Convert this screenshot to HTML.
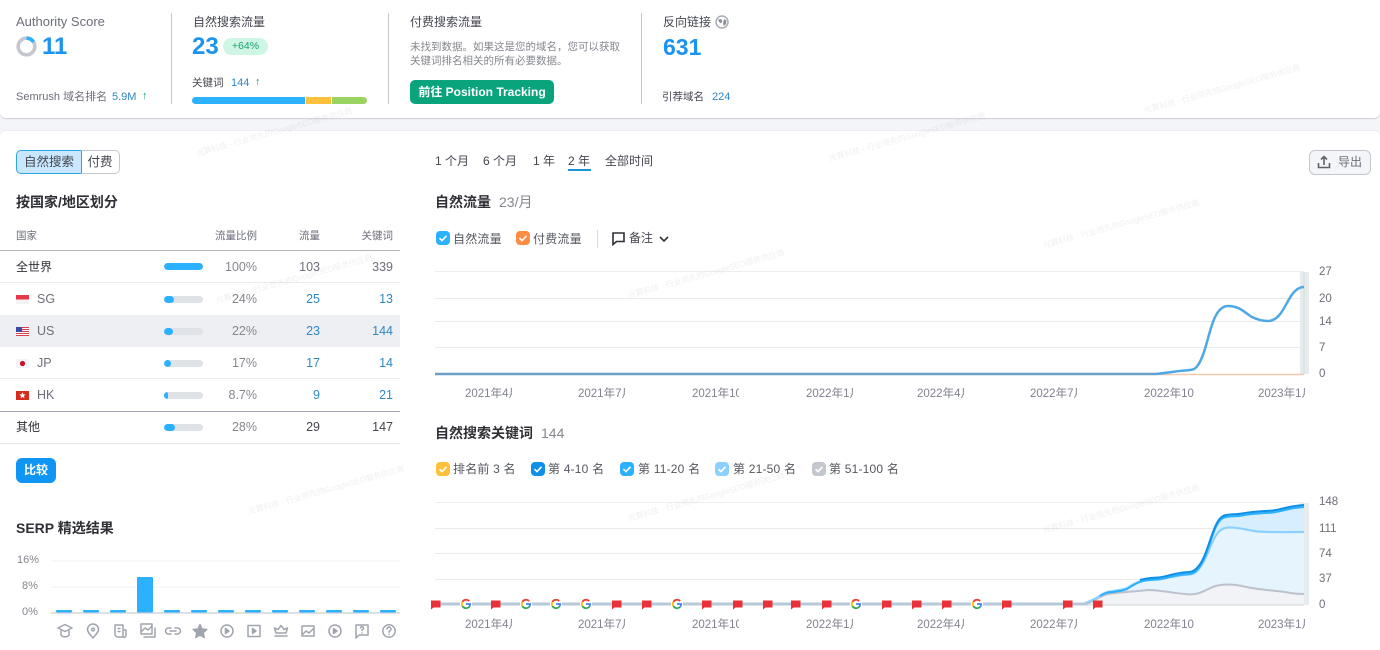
<!DOCTYPE html>
<html lang="zh">
<head>
<meta charset="utf-8">
<title>Overview</title>
<style>
html,body{margin:0;padding:0;width:1380px;height:650px;overflow:hidden;background:#fff}
body{position:relative;font-family:"Liberation Sans","Noto Sans CJK SC",sans-serif;color:#333;filter:blur(.35px)}
.a{position:absolute}
.t{position:absolute;white-space:nowrap;line-height:16px;height:16px;font-size:12px;color:#44464f}
.r{text-align:right}
.b{color:#2f87c4}
.h{font-size:14px;font-weight:bold;color:#2f3036}
.g{color:#6c6e79}
.big{font-size:24px;font-weight:bold;color:#1a94f0;line-height:28px;height:28px}
.d{position:absolute;width:1px;background:#c4c7cf}
.l{position:absolute;left:0;width:400px;height:1px}
.bar{position:absolute;left:164px;width:39px;height:7px;border-radius:4px;background:#dfe2e6;overflow:hidden}
.bar i{display:block;height:7px;background:#2bb1ff;border-radius:4px}
.cb{position:absolute;width:14px;height:14px;border-radius:4px;top:0}
.cb svg{display:block}
.wm{position:absolute;font-size:8px;line-height:12px;white-space:nowrap;color:rgba(140,145,155,.14);transform:rotate(-15.5deg);transform-origin:0 100%;z-index:5}
.x{position:absolute;font-size:11.5px;line-height:14px;height:14px;color:#80838e;overflow:hidden;white-space:nowrap;width:47px}
.y{position:absolute;left:1319px;font-size:11.5px;line-height:14px;color:#6c6e79}
.f{position:absolute;left:16px;width:13px;height:9px}
.s{position:absolute;left:0;top:0}
</style>
</head>
<body>
<!-- top -->
<div class="a" style="left:0;top:108px;width:1380px;height:34px;background:#f4f5f9"></div>
<div class="a" style="left:0;top:-6px;width:1380px;height:124px;background:#fff;border-radius:0 0 6px 6px;box-shadow:0 1px 1px rgba(120,125,140,.3)"></div>
<div class="a" style="left:0;top:131px;width:1380px;height:519px;background:#fff;border-radius:6px 6px 0 0;box-shadow:0 -1px 0 #eceef2"></div>

<div class="t g" style="left:16px;top:14px;font-size:13px">Authority Score</div>
<svg class="a" style="left:16px;top:36px" width="21" height="21"><circle cx="10.5" cy="10.5" r="8.3" fill="none" stroke="#c4c7cf" stroke-width="3.6"/><path d="M10.5 2.2A8.3 8.3 0 0 1 17.5 6" fill="none" stroke="#2bb1ff" stroke-width="3.6"/></svg>
<div class="t big" style="left:42px;top:33px">11</div>
<div class="t g" style="left:16px;top:89px;font-size:11px">Semrush 域名排名</div>
<div class="t b" style="left:112px;top:89px;font-size:11px">5.9M</div>
<div class="t" style="left:142px;top:88px;font-size:11px;color:#1a9f72">↑</div>

<div class="d" style="left:171px;top:13px;height:91px"></div>
<div class="t" style="left:193px;top:14px">自然搜索流量</div>
<div class="t big" style="left:192px;top:33px">23</div>
<div class="a" style="left:223px;top:38px;width:45px;height:17px;border-radius:9px;background:#cff5e5;color:#1a9f72;font-size:10.5px;line-height:17px;text-align:center">+64%</div>
<div class="t" style="left:192px;top:75px;font-size:10.5px">关键词</div>
<div class="t b" style="left:231px;top:75px;font-size:11px">144</div>
<div class="t" style="left:255px;top:74px;font-size:11px;color:#1a9f72">↑</div>
<div class="a" style="left:192px;top:97px;width:175px;height:7px;border-radius:4px;overflow:hidden;background:#fff">
<div class="a" style="left:0;top:0;width:113px;height:7px;background:#2bb1ff"></div>
<div class="a" style="left:114px;top:0;width:25px;height:7px;background:#ffc13b"></div>
<div class="a" style="left:140px;top:0;width:35px;height:7px;background:#98d45f"></div>
</div>

<div class="d" style="left:388px;top:13px;height:91px"></div>
<div class="t" style="left:410px;top:14px">付费搜索流量</div>
<div class="t" style="left:410px;top:39px;font-size:10.5px;color:#85878f">未找到数据。如果这是您的域名，您可以获取</div>
<div class="t" style="left:410px;top:53px;font-size:10.5px;color:#85878f">关键词排名相关的所有必要数据。</div>
<div class="a" style="left:410px;top:80px;width:144px;height:24px;background:#0aa47c;border-radius:5px;color:#fff;font-size:12px;font-weight:bold;line-height:24px;text-align:center;white-space:nowrap">前往 Position Tracking</div>

<div class="d" style="left:641px;top:13px;height:91px"></div>
<div class="t" style="left:663px;top:14px">反向链接</div>
<svg class="a" style="left:715px;top:15px" width="14" height="14" viewBox="0 0 14 14"><circle cx="7" cy="7" r="6" fill="#fff" stroke="#a8abb4" stroke-width="1.5"/><path d="M3 4.5L6 4l1.5 2L6 8.5 4 7zM9 4l2.5 1.5L11 9l-2 2-1-2.5z" fill="#8d9099"/></svg>
<div class="t big" style="left:663px;top:33px;font-size:23px">631</div>
<div class="t" style="left:662px;top:89px;font-size:10.5px">引荐域名</div>
<div class="t b" style="left:712px;top:89px;font-size:11px">224</div>

<!-- left -->
<div class="a" style="left:16px;top:150px;width:64px;height:22px;border:1px solid #2ba6ea;border-radius:5px 0 0 5px;background:#c9e7ff;color:#44464f;font-size:12.5px;line-height:22px;text-align:center">自然搜索</div>
<div class="a" style="left:81px;top:150px;width:38px;height:22px;border:1px solid #c4c7cf;border-left:0;border-radius:0 5px 5px 0;font-size:12.5px;line-height:22px;text-align:center;color:#44464f">付费</div>
<div class="t h" style="left:16px;top:194px">按国家/地区划分</div>

<div class="t g" style="left:16px;top:228px;font-size:10.5px">国家</div>
<div class="t g r" style="left:197px;width:60px;top:228px;font-size:10.5px">流量比例</div>
<div class="t g r" style="left:280px;width:40px;top:228px;font-size:10.5px">流量</div>
<div class="t g r" style="left:343px;width:50px;top:228px;font-size:10.5px">关键词</div>
<div class="l" style="top:250px;background:#b0b3bc"></div>
<div class="l" style="top:282px;background:#e9ebef"></div>
<div class="a" style="left:0;top:315px;width:400px;height:32px;background:#eeeff3"></div>
<div class="l" style="top:378px;background:#e9ebef"></div>
<div class="l" style="top:411px;background:#a5a8b0"></div>
<div class="l" style="top:443px;background:#e4e6ea"></div>

<div class="t" style="left:16px;top:259px;font-size:12px;color:#2f3036">全世界</div>
<div class="bar" style="top:263px"><i style="width:39px"></i></div>
<div class="t g r" style="left:197px;width:60px;top:259px;font-size:12.5px;color:#85878f">100%</div>
<div class="t g r" style="left:280px;width:40px;top:259px;font-size:12.5px">103</div>
<div class="t g r" style="left:343px;width:50px;top:259px;font-size:12.5px">339</div>

<svg class="f" style="top:295px" viewBox="0 0 13 9"><rect width="13" height="9" fill="#f3f3f5"/><rect width="13" height="4.5" fill="#e8394a"/></svg>
<div class="t g" style="left:37px;top:291px;font-size:12.5px">SG</div>
<div class="bar" style="top:296px"><i style="width:10px"></i></div>
<div class="t r" style="left:197px;width:60px;top:291px;font-size:12.5px;color:#85878f">24%</div>
<div class="t b r" style="left:280px;width:40px;top:291px;font-size:12.5px">25</div>
<div class="t b r" style="left:343px;width:50px;top:291px;font-size:12.5px">13</div>

<svg class="f" style="top:327px" viewBox="0 0 13 9"><rect width="13" height="9" fill="#fff"/><path d="M0 .5h13M0 2.5h13M0 4.5h13M0 6.5h13M0 8.5h13" stroke="#d8404f" stroke-width="1"/><rect width="6" height="5" fill="#3f48a8"/></svg>
<div class="t g" style="left:37px;top:323px;font-size:12.5px">US</div>
<div class="bar" style="top:328px"><i style="width:9px"></i></div>
<div class="t r" style="left:197px;width:60px;top:323px;font-size:12.5px;color:#85878f">22%</div>
<div class="t b r" style="left:280px;width:40px;top:323px;font-size:12.5px">23</div>
<div class="t b r" style="left:343px;width:50px;top:323px;font-size:12.5px">144</div>

<svg class="f" style="top:359px" viewBox="0 0 13 9"><rect width="13" height="9" fill="#f3f3f5"/><circle cx="6.5" cy="4.5" r="2.6" fill="#c8102e"/></svg>
<div class="t g" style="left:37px;top:355px;font-size:12.5px">JP</div>
<div class="bar" style="top:360px"><i style="width:7px"></i></div>
<div class="t r" style="left:197px;width:60px;top:355px;font-size:12.5px;color:#85878f">17%</div>
<div class="t b r" style="left:280px;width:40px;top:355px;font-size:12.5px">17</div>
<div class="t b r" style="left:343px;width:50px;top:355px;font-size:12.5px">14</div>

<svg class="f" style="top:391px" viewBox="0 0 13 9"><rect width="13" height="9" fill="#d62b1f"/><path d="M6.5 1.2l.9 2.2 2.3.1-1.8 1.5.6 2.2-2-1.2-2 1.2.6-2.2-1.8-1.5 2.3-.1z" fill="#fff"/></svg>
<div class="t g" style="left:37px;top:387px;font-size:12.5px">HK</div>
<div class="bar" style="top:392px"><i style="width:4px"></i></div>
<div class="t r" style="left:197px;width:60px;top:387px;font-size:12.5px;color:#85878f">8.7%</div>
<div class="t b r" style="left:280px;width:40px;top:387px;font-size:12.5px">9</div>
<div class="t b r" style="left:343px;width:50px;top:387px;font-size:12.5px">21</div>

<div class="t" style="left:16px;top:419px;font-size:12px;color:#2f3036">其他</div>
<div class="bar" style="top:424px"><i style="width:11px"></i></div>
<div class="t r" style="left:197px;width:60px;top:419px;font-size:12.5px;color:#85878f">28%</div>
<div class="t g r" style="left:280px;width:40px;top:419px;font-size:12.5px;color:#44464f">29</div>
<div class="t g r" style="left:343px;width:50px;top:419px;font-size:12.5px;color:#44464f">147</div>

<div class="a" style="left:16px;top:458px;width:40px;height:25px;border-radius:6px;background:#0f96f5;color:#fff;font-size:12px;font-weight:bold;line-height:25px;text-align:center">比较</div>

<div class="t h" style="left:16px;top:520px">SERP 精选结果</div>
<div class="t" style="left:17px;top:552px;font-size:11px;color:#85878f">16%</div>
<div class="t" style="left:22px;top:578px;font-size:11px;color:#85878f">8%</div>
<div class="t" style="left:22px;top:604px;font-size:11px;color:#85878f">0%</div>
<svg class="a" style="left:0;top:550px" width="410" height="100">
<path d="M51 11h349M51 37h349" stroke="#eef0f3" stroke-width="1"/>
<path d="M51 63h349" stroke="#d4d6db" stroke-width="1.5"/>
<g fill="#2bb1ff">
<rect x="56" y="60" width="16" height="2.5" rx="1"/><rect x="83" y="60" width="16" height="2.5" rx="1"/><rect x="110" y="60" width="16" height="2.5" rx="1"/>
<rect x="137" y="27" width="16" height="35.5" rx="1"/>
<rect x="164" y="60" width="16" height="2.5" rx="1"/><rect x="191" y="60" width="16" height="2.5" rx="1"/><rect x="218" y="60" width="16" height="2.5" rx="1"/><rect x="245" y="60" width="16" height="2.5" rx="1"/><rect x="272" y="60" width="16" height="2.5" rx="1"/><rect x="299" y="60" width="16" height="2.5" rx="1"/><rect x="326" y="60" width="16" height="2.5" rx="1"/><rect x="353" y="60" width="16" height="2.5" rx="1"/><rect x="380" y="60" width="16" height="2.5" rx="1"/>
</g>
<g fill="none" stroke="#a0a4ad" stroke-width="1.5" stroke-linejoin="round" stroke-linecap="round">
<path d="M58 78l7-3.5 7 3.5-7 3.5zM61 81v4c2 2.500 6 2.500 8 0v-4"/>
<path d="M93 88c-3-3.500-5.500-6-5.500-8.500a5.500 5.500 0 0 1 11 0c0 2.500-2.500 5-5.500 8.500z"/><circle cx="93" cy="79.500" r="1.400"/>
<path d="M115 75h8v12h-5a3 3 0 0 1-3-3zM123 80h3v5a2 2 0 0 1-3 2M118 78.500h2M118 81.500h2"/>
<path d="M141 74h11v10h-11zM141 82l4-4 3 2 4-4M144 87h11v-9"/>
<path d="M171 78h-2.500a3 3 0 0 0 0 6h2.500M175 78h2.500a3 3 0 0 1 0 6H175M170 81h6"/>
<path d="M200 74.500l2 4.500 4.800.5-3.600 3.200 1 4.800-4.200-2.500-4.200 2.500 1-4.800-3.600-3.200 4.800-.5z" fill="#a0a4ad"/>
<circle cx="227" cy="81" r="6"/><path d="M225.500 78.500l3.500 2.500-3.500 2.500z" fill="#a0a4ad"/>
<rect x="248" y="75.500" width="12" height="11"/><path d="M252.500 78.500l3.500 2.500-3.500 2.500z" fill="#a0a4ad"/>
<path d="M275 86h12M276 83l-1.500-5 3.500 1.500 3-4 3 4 3.500-1.500-1.500 5z"/>
<path d="M302 76h12v10h-12zM302 85l4-4 3 2 4-4"/>
<circle cx="335" cy="81" r="6"/><path d="M333.500 78.500l3.500 2.500-3.500 2.500z" fill="#a0a4ad"/>
<path d="M356 75h12v10h-9l-3 3zM362 83h0M360.500 78a1.500 1.500 0 1 1 2 1.500l-.5 1"/>
<circle cx="389" cy="81" r="6.200"/><path d="M387 79a2 2 0 1 1 3 1.800l-1 1v.5M389 84.500h0"/>
</g>
</svg>

<!-- periods -->
<div class="t" style="left:435px;top:153px">1 个月</div>
<div class="t" style="left:483px;top:153px">6 个月</div>
<div class="t" style="left:533px;top:153px">1 年</div>
<div class="t" style="left:568px;top:153px">2 年</div>
<div class="a" style="left:568px;top:169px;width:23px;height:2px;background:#1a94d8"></div>
<div class="t" style="left:605px;top:153px">全部时间</div>

<div class="a" style="left:1309px;top:150px;width:60px;height:23px;background:#f4f5f9;border:1px solid #c4c7cf;border-radius:6px"></div>
<svg class="a" style="left:1317px;top:154px" width="14" height="16" viewBox="0 0 14 16"><path d="M7 11V3M4 5.500L7 2.500l3 3M1.500 9v4.500h11V9" fill="none" stroke="#5f616b" stroke-width="1.600"/></svg>
<div class="t g" style="left:1338px;top:154px">导出</div>

<!-- chart 1 -->
<div class="t h" style="left:435px;top:194px">自然流量</div>
<div class="t" style="left:499px;top:194px;font-size:14px;color:#85878f">23/月</div>

<div class="cb" style="left:436px;top:231px;background:#2bb1ff"><svg width="14" height="14"><path d="M3.500 7.200l2.500 2.400 4.500-4.800" fill="none" stroke="#fff" stroke-width="1.600"/></svg></div>
<div class="t" style="left:453px;top:231px;color:#55575f;letter-spacing:.2px">自然流量</div>
<div class="cb" style="left:516px;top:231px;background:#ff8c43"><svg width="14" height="14"><path d="M3.500 7.200l2.500 2.400 4.500-4.800" fill="none" stroke="#fff" stroke-width="1.600"/></svg></div>
<div class="t" style="left:533px;top:231px;color:#55575f;letter-spacing:.2px">付费流量</div>
<div class="a" style="left:597px;top:230px;width:1px;height:18px;background:#d8dae0"></div>
<svg class="a" style="left:611px;top:231px" width="15" height="15" viewBox="0 0 15 15"><path d="M2 2h11v8.500H5.500L2 13.500z" fill="none" stroke="#2f3036" stroke-width="1.600"/></svg>
<div class="t" style="left:629px;top:230px">备注</div>
<svg class="a" style="left:659px;top:235px" width="10" height="8"><path d="M1 2l4 4 4-4" fill="none" stroke="#333" stroke-width="1.600"/></svg>

<svg class="s" width="1380" height="650" style="pointer-events:none">
<path d="M435 271.500H1304" stroke="#eceef1" stroke-width="1"/>
<path d="M435 298.500H1304M435 321.500H1304M435 347.500H1304" stroke="#e8eaee" stroke-width="1"/>
<rect x="1300" y="272" width="9" height="102" fill="#e6ecee"/>
<path d="M1304 272V374" stroke="#d3dcdf" stroke-width="1"/>
<path d="M1155 374.500H1304" stroke="#f3c9ad" stroke-width="1.500"/>
<path d="M435 374H1155" stroke="#6c9fc6" stroke-width="2.400"/>
<path d="M1155 374C1165 373.500 1175 371 1185 370.500C1192 370 1195 370 1198 365C1205 355 1208 335 1213 322C1217 311 1222 306 1228 306C1240 306 1245 313 1252 317C1258 320 1263 321 1268 321C1280 321 1285 305 1291 296C1295 290 1299 287 1304 287" fill="none" stroke="#4fa8e6" stroke-width="2.500"/>

<!-- chart 2 -->
<path d="M435 502.500H1304" stroke="#eceef1" stroke-width="1"/>
<path d="M435 528.500H1304M435 553.500H1304M435 579.500H1304" stroke="#e8eaee" stroke-width="1"/>
<rect x="1300" y="503" width="9" height="102" fill="#e6ecee"/>
<path d="M1085 605V603C1092 602 1095 597 1100 594C1104 591 1108 590 1113 590C1118 589 1123 589 1127 587C1132 584 1136 581 1141 579.500C1146 578 1152 578 1158 577.500C1165 577 1172 574 1180 573C1185 572 1190 572.500 1193 571C1199 568 1203 560 1206 552C1209 544 1212 534 1215 527C1218 520 1221 516 1226 515C1232 514 1237 514.500 1242 513.500C1250 512 1256 511.500 1265 511C1275 511 1280 509 1287 507.500C1293 506 1298 505.500 1304 505V605Z" fill="#d6eefe"/>
<path d="M1085 605V603C1095 600 1100 595 1108 592C1118 590 1123 590 1127 588C1135 583 1140 581 1148 580C1160 579 1170 577 1180 575.500C1188 574.500 1192 575 1196 572C1203 566 1208 552 1212 543C1216 534 1220 528 1228 527.500C1238 527 1245 530 1258 531.500C1272 532.500 1290 532 1304 532V605Z" fill="#e6f4fe"/>
<path d="M1085 605V604C1092 603 1098 597 1106 594.500C1115 592.500 1130 592 1148 590C1160 590 1175 593.500 1190 594.500C1200 594.500 1205 590 1214 586.500C1222 584 1232 584 1242 586C1255 589.500 1270 590 1285 592C1292 593.500 1298 594 1304 594V605Z" fill="#f2f3f6"/>
<path d="M1085 605H1304" stroke="#d3d5db" stroke-width="1"/>
<path d="M1085 604C1092 603 1098 597 1106 594.500C1115 592.500 1130 592 1148 590C1160 590 1175 593.500 1190 594.500C1200 594.500 1205 590 1214 586.500C1222 584 1232 584 1242 586C1255 589.500 1270 590 1285 592C1292 593.500 1298 594 1304 594" fill="none" stroke="#bcc1cb" stroke-width="2"/>
<path d="M1085 603C1095 600 1100 595 1108 592C1118 590 1123 590 1127 588C1135 583 1140 581 1148 580C1160 579 1170 577 1180 575.500C1188 574.500 1192 575 1196 572C1203 566 1208 552 1212 543C1216 534 1220 528 1228 527.500C1238 527 1245 530 1258 531.500C1272 532.500 1290 532 1304 532" fill="none" stroke="#8cd0ff" stroke-width="2.200"/>
<path d="M1100 596C1104 593 1108 592 1113 592C1118 591 1123 591 1127 589C1132 586 1136 583 1141 581.500C1146 580 1152 580 1158 579.500C1165 579 1172 576 1180 575C1185 574 1190 574.500 1193 573C1199 570 1203 562 1206 554C1209 546 1212 536 1215 529C1218 522 1221 518 1226 517C1232 516 1237 516.500 1242 515.500C1250 514 1256 513.500 1265 513C1275 513 1280 511 1287 509.500C1293 508 1298 507.500 1304 507" fill="none" stroke="#2bb1ff" stroke-width="2"/>
<path d="M1140 580C1146 578 1152 578 1158 577.500C1165 577 1172 574 1180 573C1185 572 1190 572.500 1193 571C1199 568 1203 560 1206 552C1209 544 1212 534 1215 527C1218 520 1221 516 1226 515C1232 514 1237 514.500 1242 513.500C1250 512 1256 511.500 1265 511C1275 511 1280 509 1287 507.500C1293 506 1298 505.500 1304 505" fill="none" stroke="#0f8fe8" stroke-width="2"/>
<path d="M436 604H1088" stroke="#b7c9d8" stroke-width="3"/>
<g fill="#e9313a">
<path d="M431 600.500h9.500v7h-7l-2.500 2z"/>
<path d="M491 600.500h9.500v7h-7l-2.500 2z"/><path d="M612 600.500h9.500v7h-7l-2.500 2z"/><path d="M642 600.500h9.500v7h-7l-2.500 2z"/><path d="M702 600.500h9.500v7h-7l-2.500 2z"/><path d="M733 600.500h9.500v7h-7l-2.500 2z"/><path d="M763 600.500h9.500v7h-7l-2.500 2z"/><path d="M791 600.500h9.500v7h-7l-2.500 2z"/><path d="M822 600.500h9.500v7h-7l-2.500 2z"/><path d="M882 600.500h9.500v7h-7l-2.500 2z"/><path d="M912 600.500h9.500v7h-7l-2.500 2z"/><path d="M942 600.500h9.500v7h-7l-2.500 2z"/><path d="M1002 600.500h9.500v7h-7l-2.500 2z"/><path d="M1063 600.500h9.500v7h-7l-2.500 2z"/><path d="M1093 600.500h9.500v7h-7l-2.500 2z"/>
</g>
<defs>
<g id="G" fill="none" stroke-width="1.800">
<path d="M3.100 -2.900A4.200 4.200 0 0 0 -3.600 -2.100" stroke="#ea4335"/>
<path d="M-3.600 -2.100A4.200 4.200 0 0 0 -3.600 2.100" stroke="#fbbc05"/>
<path d="M-3.600 2.100A4.200 4.200 0 0 0 3 3" stroke="#34a853"/>
<path d="M3 3A4.200 4.200 0 0 0 4.200 0H0" stroke="#4285f4"/>
</g>
</defs>
<circle cx="466" cy="604" r="6" fill="#fff"/><use href="#G" x="466" y="604"/>
<circle cx="526" cy="604" r="6" fill="#fff"/><use href="#G" x="526" y="604"/>
<circle cx="556" cy="604" r="6" fill="#fff"/><use href="#G" x="556" y="604"/>
<circle cx="586" cy="604" r="6" fill="#fff"/><use href="#G" x="586" y="604"/>
<circle cx="677" cy="604" r="6" fill="#fff"/><use href="#G" x="677" y="604"/>
<circle cx="856" cy="604" r="6" fill="#fff"/><use href="#G" x="856" y="604"/>
<circle cx="977" cy="604" r="6" fill="#fff"/><use href="#G" x="977" y="604"/>
</svg>

<div class="x" style="left:465px;top:387px">2021年4月</div>
<div class="x" style="left:578px;top:387px">2021年7月</div>
<div class="x" style="left:692px;top:387px">2021年10月</div>
<div class="x" style="left:806px;top:387px">2022年1月</div>
<div class="x" style="left:917px;top:387px">2022年4月</div>
<div class="x" style="left:1030px;top:387px">2022年7月</div>
<div class="x" style="left:1144px;top:387px;width:50px">2022年10</div>
<div class="x" style="left:1258px;top:387px">2023年1月</div>

<div class="y" style="top:265px">27</div>
<div class="y" style="top:292px">20</div>
<div class="y" style="top:315px">14</div>
<div class="y" style="top:341px;left:1319px">7</div>
<div class="y" style="top:367px">0</div>

<!-- chart 2 header -->
<div class="t h" style="left:435px;top:425px">自然搜索关键词</div>
<div class="t" style="left:541px;top:425px;font-size:14px;color:#85878f">144</div>

<div class="cb" style="left:436px;top:462px;background:#ffc13b"><svg width="14" height="14"><path d="M3.500 7.200l2.500 2.400 4.500-4.800" fill="none" stroke="#fff" stroke-width="1.600"/></svg></div>
<div class="t" style="left:453px;top:461px;color:#55575f;letter-spacing:.2px">排名前 3 名</div>
<div class="cb" style="left:531px;top:462px;background:#0f8fe8"><svg width="14" height="14"><path d="M3.500 7.200l2.500 2.400 4.500-4.800" fill="none" stroke="#fff" stroke-width="1.600"/></svg></div>
<div class="t" style="left:548px;top:461px;color:#55575f;letter-spacing:.2px">第 4-10 名</div>
<div class="cb" style="left:620px;top:462px;background:#2bb1ff"><svg width="14" height="14"><path d="M3.500 7.200l2.500 2.400 4.500-4.800" fill="none" stroke="#fff" stroke-width="1.600"/></svg></div>
<div class="t" style="left:638px;top:461px;color:#55575f;letter-spacing:.2px">第 11-20 名</div>
<div class="cb" style="left:715px;top:462px;background:#8cd0ff"><svg width="14" height="14"><path d="M3.500 7.200l2.500 2.400 4.500-4.800" fill="none" stroke="#fff" stroke-width="1.600"/></svg></div>
<div class="t" style="left:733px;top:461px;color:#55575f;letter-spacing:.2px">第 21-50 名</div>
<div class="cb" style="left:812px;top:462px;background:#c4c7cf"><svg width="14" height="14"><path d="M3.500 7.200l2.500 2.400 4.500-4.800" fill="none" stroke="#fff" stroke-width="1.600"/></svg></div>
<div class="t" style="left:829px;top:461px;color:#55575f;letter-spacing:.2px">第 51-100 名</div>

<div class="x" style="left:465px;top:618px">2021年4月</div>
<div class="x" style="left:578px;top:618px">2021年7月</div>
<div class="x" style="left:692px;top:618px">2021年10月</div>
<div class="x" style="left:806px;top:618px">2022年1月</div>
<div class="x" style="left:917px;top:618px">2022年4月</div>
<div class="x" style="left:1030px;top:618px">2022年7月</div>
<div class="x" style="left:1144px;top:618px;width:50px">2022年10</div>
<div class="x" style="left:1258px;top:618px">2023年1月</div>

<div class="y" style="top:495px">148</div>
<div class="y" style="top:522px">111</div>
<div class="y" style="top:547px">74</div>
<div class="y" style="top:572px">37</div>
<div class="y" style="top:598px">0</div>

<!-- watermarks -->
<div class="wm" style="left:198px;top:148px">光算科技 - 行业领先的GoogleSEO服务供应商</div>
<div class="wm" style="left:831px;top:153px">光算科技 - 行业领先的GoogleSEO服务供应商</div>
<div class="wm" style="left:1146px;top:105px">光算科技 - 行业领先的GoogleSEO服务供应商</div>
<div class="wm" style="left:1045px;top:240px">光算科技 - 行业领先的GoogleSEO服务供应商</div>
<div class="wm" style="left:630px;top:290px">光算科技 - 行业领先的GoogleSEO服务供应商</div>
<div class="wm" style="left:218px;top:295px">光算科技 - 行业领先的GoogleSEO服务供应商</div>
<div class="wm" style="left:250px;top:506px">光算科技 - 行业领先的GoogleSEO服务供应商</div>
<div class="wm" style="left:630px;top:513px">光算科技 - 行业领先的GoogleSEO服务供应商</div>
<div class="wm" style="left:1045px;top:525px">光算科技 - 行业领先的GoogleSEO服务供应商</div>
</body>
</html>
